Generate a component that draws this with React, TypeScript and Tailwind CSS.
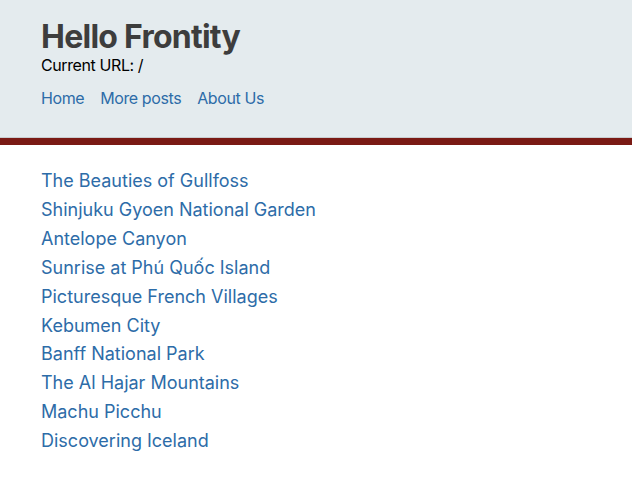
import React from "react";

const posts = [
  "The Beauties of Gullfoss",
  "Shinjuku Gyoen National Garden",
  "Antelope Canyon",
  "Sunrise at Phú Quốc Island",
  "Picturesque French Villages",
  "Kebumen City",
  "Banff National Park",
  "The Al Hajar Mountains",
  "Machu Picchu",
  "Discovering Iceland",
];

export default function App() {
  return (
    <div className="min-h-[487px] bg-white" style={{ fontFamily: "Inter, 'Noto Sans', sans-serif" }}>
      <header className="bg-[#e4ebee] border-b-[7px] border-[#7a1a14] shadow-[inset_0_-1px_0_#c9cdd0] px-[41px] pt-[19px] pb-[25px] h-[145px] box-border">
        <h1 className="text-[32px] leading-[36px] font-bold text-[#3d3d3d] tracking-[-0.75px]">Hello Frontity</h1>
        <p className="text-[16px] leading-[20px] text-black tracking-[-0.4px]">Current URL: /</p>
        <nav className="flex gap-4 mt-[13px] text-[16px] leading-[20px] text-[#2d6ca8] tracking-[-0.4px]">
          <a href="#">Home</a>
          <a href="#">More posts</a>
          <a href="#">About Us</a>
        </nav>
      </header>
      <main className="px-[41px] pt-[22px] flex flex-col">
        {posts.map((p) => (
          <a key={p} href="#" className="text-[18px] leading-[28.9px] text-[#2d6ca8] w-fit">
            {p}
          </a>
        ))}
      </main>
    </div>
  );
}
